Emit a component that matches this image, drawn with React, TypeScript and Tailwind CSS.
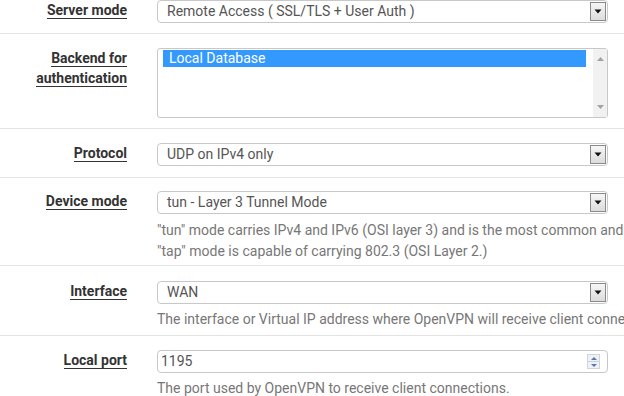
import type { ReactNode } from "react";

function Label({ lines }: { lines: string[] }) {
  return (
    <div className="w-[127px] shrink-0 text-right font-bold text-[14px] leading-[20px] text-[#333]">
      {lines.map((l) => (
        <div key={l}>
          <span className="border-b border-[#333]">{l}</span>
        </div>
      ))}
    </div>
  );
}

function DropButton() {
  return (
    <div className="w-[16px] shrink-0 my-[1px] mr-[1px] border border-[#8a8a8a] bg-gradient-to-b from-[#f6f6f6] to-[#dcdcdc] flex items-center justify-center">
      <svg width="8" height="5" viewBox="0 0 8 5">
        <path d="M0.5 0.5 H7.5 L4 4.5 Z" fill="#111" />
      </svg>
    </div>
  );
}

function Select({ value }: { value: string }) {
  return (
    <div className="w-[451px] h-[23px] flex border border-[#c8c8c8] rounded-[4px] bg-white">
      <div className="flex-1 pl-[9px] text-[14px] leading-[21px] text-[#555]">{value}</div>
      <DropButton />
    </div>
  );
}

function Help({ children }: { children: ReactNode }) {
  return <div className="whitespace-nowrap text-[14px] text-[#777]">{children}</div>;
}

function Row({ label, pad, children }: { label: string[]; pad: string; children: ReactNode }) {
  return (
    <div className={`flex gap-[30px] border-b border-[#e3e3e3] ${pad}`}>
      <Label lines={label} />
      <div className="flex flex-col">{children}</div>
    </div>
  );
}

export default function App() {
  return (
    <div className="w-[624px] h-[396px] overflow-hidden bg-white font-['Roboto',sans-serif]">
      <Row label={["Server mode"]} pad="pt-0 pb-[10px]">
        <Select value="Remote Access ( SSL/TLS + User Auth )" />
      </Row>

      <Row label={["Backend for", "authentication"]} pad="pt-[14px] pb-[10px]">
        <div className="w-[451px] h-[70px] flex border border-[#c8c8c8] rounded-[3px] bg-white">
          <div className="flex-1 pl-[5px] pt-[1px] pr-[7px]">
            <div className="h-[17px] bg-[#3399ff] text-white text-[14px] leading-[17px] pl-[6px]">Local Database</div>
          </div>
          <div className="w-[14px] bg-[#f1f1f1] flex flex-col justify-between items-center py-[8px]">
            <svg width="7" height="4" viewBox="0 0 7 4">
              <path d="M0 4 L3.5 0 L7 4 Z" fill="#a3a3a3" />
            </svg>
            <svg width="7" height="4" viewBox="0 0 7 4">
              <path d="M0 0 L7 0 L3.5 4 Z" fill="#a3a3a3" />
            </svg>
          </div>
        </div>
      </Row>

      <Row label={["Protocol"]} pad="pt-[14px] pb-[11px]">
        <Select value="UDP on IPv4 only" />
      </Row>

      <Row label={["Device mode"]} pad="pt-[13px] pb-[3px]">
        <Select value="tun - Layer 3 Tunnel Mode" />
        <div className="mt-[6px] leading-[21px]">
          <Help>"tun" mode carries IPv4 and IPv6 (OSI layer 3) and is the most common and compatible mode across all platforms.</Help>
          <Help>"tap" mode is capable of carrying 802.3 (OSI Layer 2.)</Help>
        </div>
      </Row>

      <Row label={["Interface"]} pad="pt-[15px] pb-[6px]">
        <Select value="WAN" />
        <div className="mt-[5px] leading-[20px]">
          <Help>The interface or Virtual IP address where OpenVPN will receive client connections.</Help>
        </div>
      </Row>

      <Row label={["Local port"]} pad="pt-[14px] pb-[6px]">
        <div className="w-[451px] h-[23px] flex items-center border border-[#c8c8c8] rounded-[4px] bg-white">
          <div className="flex-1 pl-[3px] text-[14px] leading-[21px] text-[#555]">1195</div>
          <div className="w-[13px] h-[15px] mr-[7px] flex flex-col border border-[#d4d4d4]">
            <div className="flex-1 bg-[#eef1f6] flex items-center justify-center border-b border-[#c9d2e0]">
              <svg width="6" height="3" viewBox="0 0 6 3">
                <path d="M0 3 L3 0 L6 3 Z" fill="#5a78a8" />
              </svg>
            </div>
            <div className="flex-1 bg-[#eef1f6] flex items-center justify-center">
              <svg width="6" height="3" viewBox="0 0 6 3">
                <path d="M0 0 L6 0 L3 3 Z" fill="#5a78a8" />
              </svg>
            </div>
          </div>
        </div>
        <div className="mt-[5px] leading-[20px]">
          <Help>The port used by OpenVPN to receive client connections.</Help>
        </div>
      </Row>
    </div>
  );
}
